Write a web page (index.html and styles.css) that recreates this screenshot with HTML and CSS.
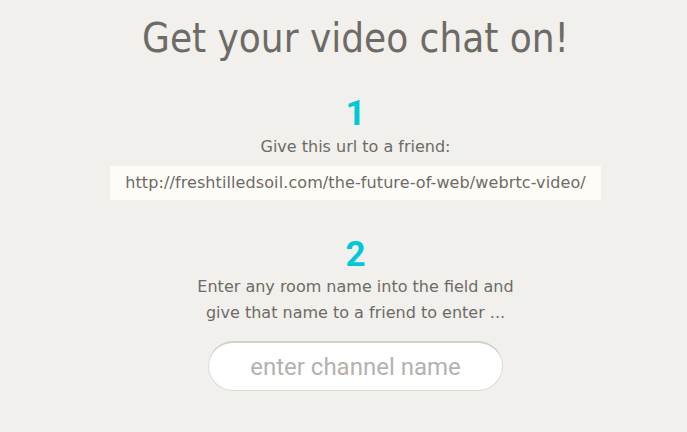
FILE: index.html
```html
<!DOCTYPE html>
<html>
<head>
<meta charset="utf-8">
<link rel="stylesheet" href="styles.css">
</head>
<body>
<main class="page">
  <h1 class="title">Get your video chat on!</h1>
  <section class="step">
    <div class="num">1</div>
    <p class="desc">Give this url to a friend:</p>
    <div class="url">http://freshtilledsoil.com/the-future-of-web/webrtc-video/</div>
  </section>
  <section class="step step-two">
    <div class="num">2</div>
    <p class="desc">Enter any room name into the field and<br>give that name to a friend to enter ...</p>
    <input class="channel" type="text" placeholder="enter channel name">
  </section>
  <section class="step step-three">
    <div class="num">3</div>
  </section>
</main>
</body>
</html>
```
FILE: styles.css
```css
html, body {
  margin: 0;
  padding: 0;
  background: #f1f0ec;
}
.page {
  display: flex;
  flex-direction: column;
  align-items: center;
  padding-left: 24px;
  font-family: "DejaVu Sans", Verdana, sans-serif;
  color: #6e6a66;
}
.title {
  margin: 14px 0 0;
  font-family: "DejaVu Sans Condensed", "DejaVu Sans", sans-serif;
  font-size: 40px;
  font-weight: normal;
  line-height: 48px;
  letter-spacing: 0;
}
.step {
  display: flex;
  flex-direction: column;
  align-items: center;
}
.num {
  font-family: Roboto, sans-serif;
  font-weight: bold;
  font-size: 35px;
  line-height: 40px;
  color: #00c8d7;
  margin-top: 32px;
}
.step-two .num {
  margin-top: 35px;
}
.step-three .num {
  margin-top: 35px;
}
.desc {
  margin: 0;
  font-size: 16px;
  line-height: 26px;
  text-align: center;
}
.step-two .desc {
  margin-top: -1px;
}
.url {
  margin-top: 6px;
  background: #fdfcf7;
  padding: 5px 15px;
  font-size: 16px;
  line-height: 24px;
  letter-spacing: 0.1px;
}
.channel {
  margin-top: 15px;
  width: 295px;
  height: 50px;
  box-sizing: border-box;
  border: 1px solid #dcdad5;
  border-top: 2px solid #d2d0cb;
  border-radius: 25px;
  background: #fff;
  text-align: center;
  font-family: Roboto, sans-serif;
  font-size: 24px;
  color: #6e6a66;
  outline: none;
}
.channel::placeholder {
  color: #b5b1ad;
}
```
